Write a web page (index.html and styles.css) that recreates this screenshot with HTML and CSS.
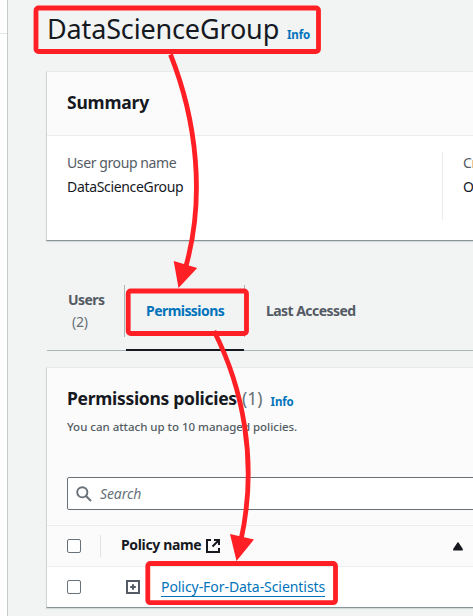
FILE: index.html
```html
<!DOCTYPE html>
<html lang="en">
<head>
<meta charset="utf-8">
<title>DataScienceGroup</title>
<link rel="stylesheet" href="styles.css">
</head>
<body>
<div class="app">
  <aside class="side"><div class="side-top"></div></aside>
  <main class="main">
    <header class="page-head"><h1>DataScienceGroup</h1><a class="info">Info</a></header>
    <section class="card summary">
      <div class="card-head"><h2>Summary</h2></div>
      <div class="columns">
        <div class="col"><div class="label">User group name</div><div class="value">DataScienceGroup</div></div>
        <div class="col next"><div class="label">Cr</div><div class="value">O</div></div>
      </div>
    </section>
    <nav class="tabs">
      <div class="tab users"><span>Users</span><span class="count">(2)</span></div>
      <div class="tab active"><span>Permissions</span></div>
      <div class="tab last"><span>Last Accessed</span></div>
    </nav>
    <section class="card policies">
      <div class="policy-head">
        <div class="heading"><h2>Permissions policies</h2><span class="number">(1)</span><a class="info">Info</a></div>
        <p>You can attach up to 10 managed policies.</p>
        <div class="search">
          <svg width="16" height="16" viewBox="0 0 16 16"><circle cx="6.3" cy="6.3" r="5.1"/><path d="M10 10l5 5"/></svg>
          <span>Search</span>
        </div>
      </div>
      <div class="row row-head">
        <span class="check"></span><span class="rule"></span><b>Policy name</b>
        <svg class="external" width="16" height="16" viewBox="0 0 16 16"><path d="M6 2H2v12h12v-4M9 2h5v5M14 2L7.5 8.5"/></svg>
        <svg class="sort" width="10" height="9" viewBox="0 0 10 9"><path d="M5 .8L9.2 7.2V8H.8v-.8z"/></svg>
      </div>
      <div class="row">
        <span class="check"></span>
        <svg class="expand" width="14" height="14" viewBox="0 0 14 14"><path d="M1 1h12v12H1zM7 4.2v5.6M4.2 7h5.6"/></svg>
        <a class="policy">Policy-For-Data-Scientists</a>
      </div>
    </section>
  </main>
  <svg class="marks" width="473" height="616" viewBox="0 0 473 616">
    <g class="stroke">
      <rect x="36" y="8" width="282.5" height="43.5" rx="2.5"/>
      <rect x="128.2" y="291" width="118.3" height="42.5" rx="2.5"/>
      <rect x="147.8" y="563.5" width="187.7" height="39.2" rx="2.5"/>
      <path d="M170.5 54.5C197 121 205 198 186 266"/>
      <path d="M214 331C242 386 258.5 460 241 540"/>
    </g>
    <path class="head" d="M173.7 261l23.5 7L178.5 288zM230 534l24 5.5L236.5 561z"/>
  </svg>
</div>
</body>
</html>
```
FILE: styles.css
```css
* { box-sizing: border-box; }
body { margin: 0; background: #f2f4f4; color: #16191f; font-family: "Noto Sans", sans-serif; font-size: 14px; }
h1, h2, p { margin: 0; }
.app { position: relative; display: flex; width: 473px; height: 616px; overflow: hidden; }
.side { flex: none; width: 8px; background: #fff; border-right: 1px solid #c4c9c9; }
.side-top { height: 34px; border-bottom: 1px solid #e2e5e5; }
.main { flex: none; width: 700px; padding-left: 38px; white-space: nowrap; }
.page-head { display: flex; align-items: baseline; height: 71px; padding: 12px 0 0 1px; }
h1 { width: 233px; font-size: 27px; line-height: 34px; font-weight: 400; letter-spacing: -0.15px; }
.info { color: #0073bb; font-size: 11.5px; font-weight: 700; line-height: 16px; letter-spacing: -0.1px; margin-left: 7px; }
.card { border: 1px solid #d0d5d5; border-top-color: #e8eaea; border-bottom-color: #879596; background: #fff; box-shadow: 0 1px 1px #d5dbdb; }
.summary { height: 170px; }
.card-head { height: 64px; background: #fbfbfb; border-bottom: 1px solid #eaeded; padding: 17px 20px; }
h2 { font-size: 17.5px; line-height: 26px; font-weight: 700; letter-spacing: -0.22px; }
.columns { display: flex; padding-top: 16px; }
.col { flex: none; width: 395px; height: 68px; padding-left: 20px; line-height: 24px; }
.label, .value { position: relative; top: -1px; }
.value { letter-spacing: -0.33px; }
.next { border-left: 1px solid #eaeded; }
.label { color: #545b64; letter-spacing: -0.4px; }
.tabs { display: flex; height: 110px; margin-left: 1px; padding-top: 44px; border-bottom: 1px solid #aab7b8; font-weight: 700; color: #545b64; }
.tab { flex: none; line-height: 22px; height: 52px; letter-spacing: -0.55px; }
.users { width: 78px; padding: 4px 0 0 21px; border-right: 1px solid #aab7b8; }
.users span { display: block; }
.count { padding-left: 4px; font-weight: 400; letter-spacing: -0.2px; color: #687078; }
.active { width: 118px; height: 66px; margin-left: 1px; padding: 15px 0 0 20px; color: #0073bb; border-bottom: 2px solid #16191f; }
.last { padding: 15px 0 0 21px; border-left: 1px solid #aab7b8; }
.policies { margin-top: 16px; height: 241px; }
.policy-head { height: 158px; padding: 17px 0 0 20px; background: #fbfbfb; border-bottom: 1px solid #eaeded; }
.heading { display: flex; align-items: baseline; height: 26px; }
.heading h2 { width: 171px; letter-spacing: -0.3px; }
.number { color: #687078; font-size: 17.5px; margin-left: 4px; }
.heading .info { margin-left: 8px; position: relative; top: 1px; }
p { color: #545b64; font-size: 11.5px; font-weight: 500; line-height: 16px; letter-spacing: -0.02px; margin-top: 8px; }
.search { display: flex; align-items: center; height: 33px; margin-top: 42px; padding-left: 8px; border: 1px solid #687078; border-radius: 2px; background: #fff; color: #687078; font-style: italic; letter-spacing: -0.1px; }
.search svg { fill: none; stroke: #687078; stroke-width: 1.9; margin-right: 8px; }
.row { display: flex; align-items: center; height: 40px; padding-left: 20px; }
.row-head { height: 41px; background: #fbfbfb; border-bottom: 1px solid #eaeded; }
.check { flex: none; width: 14px; height: 14px; border: 1px solid #687078; border-radius: 2px; background: #fff; }
.rule { width: 1px; height: 22px; background: #e0e4e4; margin: 0 20px 0 19px; }
.row b { width: 80px; padding-bottom: 3px; letter-spacing: -0.35px; }
.external { margin-left: 4px; fill: none; stroke: #16191f; stroke-width: 2; }
.sort { margin-left: 232px; fill: #16191f; stroke: #16191f; stroke-width: 1.2; stroke-linejoin: round; }
.expand { margin-left: 45px; fill: none; stroke: #545b64; stroke-width: 2; }
.policy { color: #0073bb; border-bottom: 1px solid #0073bb; line-height: 19px; letter-spacing: -0.06px; margin-left: 21px; }
.marks { position: absolute; left: 0; top: 0; }
.stroke { fill: none; stroke: #ff1f24; stroke-width: 4.8; }
.head { fill: #ff1f24; }
```
